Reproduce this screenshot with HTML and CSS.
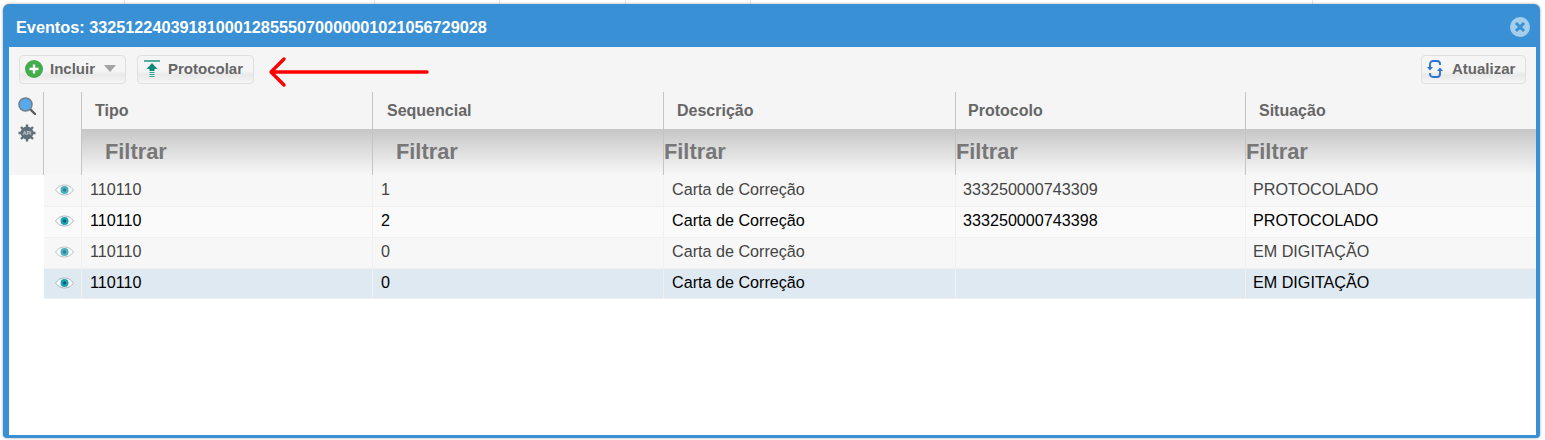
FILE: index.html
```html
<!DOCTYPE html>
<html>
<head>
  <title>Eventos</title>
  <link rel="stylesheet" href="styles.css">
</head>
<body>
  <div class="modal">
    <div class="modal-title">
      <span>Eventos: 33251224039181000128555070000001021056729028</span>
      <svg class="close-icon" width="20" height="20" viewBox="0 0 20 20">
        <circle cx="10" cy="10" r="10" fill="#a5cdec"/>
        <path d="M6 6l8 8M14 6l-8 8" stroke="#3a90d5" stroke-width="3"/>
      </svg>
    </div>

    <div class="modal-body">
      <div class="toolbar">
        <button class="btn btn-incluir">
          <svg width="18" height="18" viewBox="0 0 18 18">
            <circle cx="9" cy="9" r="9" fill="#43ac4c"/>
            <path d="M9 4.500v9M4.500 9h9" stroke="#fff" stroke-width="2.400"/>
          </svg>
          <span>Incluir</span>
          <svg class="caret" width="12" height="7" viewBox="0 0 12 7"><path d="M0 0h12L6 7z" fill="#a3a3a3"/></svg>
        </button>
        <button class="btn btn-protocolar">
          <svg width="16" height="18" viewBox="0 0 16 18">
            <path d="M0 1h16" stroke="#1f9484" stroke-width="1.500"/>
            <path d="M8 3L13.500 9H10.500v2h-5V9H2.500z" fill="#0f8a7a"/>
            <path d="M5.500 12.500h5M5.500 14.500h5M5.500 16.500h5" stroke="#2ea596" stroke-width="1.200"/>
          </svg>
          <span>Protocolar</span>
        </button>
        <button class="btn btn-atualizar">
          <svg width="16" height="18" viewBox="0 0 16 18" fill="none">
            <path d="M3 7V4a3 3 0 0 1 3-3h4a3 3 0 0 1 3 3v1" stroke="#2d74d0" stroke-width="1.900"/>
            <path d="M13 11v3a3 3 0 0 1-3 3H6a3 3 0 0 1-3-3v-1" stroke="#2d74d0" stroke-width="1.900"/>
            <path d="M0 7h6L3 10.500zM10 11h6l-3-3.500z" fill="#2d74d0"/>
          </svg>
          <span>Atualizar</span>
        </button>
        <svg class="red-arrow" width="162" height="32" viewBox="0 0 162 32" fill="none">
          <path d="M160 16H5M17 3L4 16l13 13" stroke="#f00" stroke-width="3.400" stroke-linecap="round" stroke-linejoin="round"/>
        </svg>
      </div>

      <div class="grid-area">
        <div class="side-tools">
          <svg width="18" height="18" viewBox="0 0 18 18">
            <path d="M11 11l6 6" stroke="#555" stroke-width="2.200" stroke-linecap="round"/>
            <circle cx="7.500" cy="7.500" r="6.500" fill="#59a9ee" stroke="#6d7f8c" stroke-width="1.500"/>
          </svg>
          <svg width="18" height="18" viewBox="0 0 18 18">
            <circle cx="9" cy="9" r="6.500" fill="#5f6f7b"/>
            <path d="M9 0.500v17M0.500 9h17M3 3l12 12M15 3L3 15" stroke="#5f6f7b" stroke-width="2.400"/>
            <text class="api-label" x="9" y="10.800">API</text>
          </svg>
        </div>

        <table class="grid">
          <colgroup>
            <col class="col-view">
            <col class="col-a">
            <col class="col-b">
            <col class="col-c">
            <col class="col-d">
            <col>
          </colgroup>
          <thead>
            <tr class="head-row">
              <th rowspan="2" class="view-head"></th>
              <th>Tipo</th>
              <th>Sequencial</th>
              <th>Descrição</th>
              <th>Protocolo</th>
              <th>Situação</th>
            </tr>
            <tr class="filter-row">
              <th class="filter-wide">Filtrar</th>
              <th class="filter-wide">Filtrar</th>
              <th>Filtrar</th>
              <th>Filtrar</th>
              <th>Filtrar</th>
            </tr>
          </thead>
          <tbody>
            <tr class="row-a">
              <td class="view-cell"><svg class="eye" width="19" height="12" viewBox="0 0 19 12"><use href="#eye"/></svg></td>
              <td>110110</td><td>1</td><td>Carta de Correção</td><td>333250000743309</td><td>PROTOCOLADO</td>
            </tr>
            <tr class="row-b">
              <td class="view-cell"><svg class="eye" width="19" height="12" viewBox="0 0 19 12"><use href="#eye"/></svg></td>
              <td>110110</td><td>2</td><td>Carta de Correção</td><td>333250000743398</td><td>PROTOCOLADO</td>
            </tr>
            <tr class="row-a">
              <td class="view-cell"><svg class="eye" width="19" height="12" viewBox="0 0 19 12"><use href="#eye"/></svg></td>
              <td>110110</td><td>0</td><td>Carta de Correção</td><td></td><td>EM DIGITAÇÃO</td>
            </tr>
            <tr class="row-sel">
              <td class="view-cell"><svg class="eye" width="19" height="12" viewBox="0 0 19 12"><use href="#eye"/></svg></td>
              <td>110110</td><td>0</td><td>Carta de Correção</td><td></td><td>EM DIGITAÇÃO</td>
            </tr>
          </tbody>
        </table>
      </div>
    </div>
  </div>

  <svg class="defs" width="0" height="0">
    <symbol id="eye" viewBox="0 0 19 12">
      <path d="M0.500 6C3 2.500 6 1 9.500 1s6.500 1.500 9 5c-2.500 3.500-5.500 5-9 5s-6.500-1.500-9-5z" fill="#fff" stroke="#a9b5bb" stroke-width="1"/>
      <circle cx="9.500" cy="6" r="4" fill="#1aa3b5"/>
      <circle cx="9.500" cy="6" r="1.700" fill="#0b5f70"/>
    </symbol>
  </svg>
</body>
</html>
```

FILE: styles.css
```css
html, body {
  height: 100%;
}
body {
  margin: 0;
  padding: 4px 5px 2px 3px;
  box-sizing: border-box;
  overflow: hidden;
  background-color: #fff;
  /* column lines of the page behind the dialog */
  background-image:
    linear-gradient(#e6e6e6, #e6e6e6),
    linear-gradient(#e6e6e6, #e6e6e6),
    linear-gradient(#e6e6e6, #e6e6e6),
    linear-gradient(#e6e6e6, #e6e6e6),
    linear-gradient(#e6e6e6, #e6e6e6),
    linear-gradient(#e6e6e6, #e6e6e6);
  background-size: 1px 4px;
  background-repeat: no-repeat;
  background-position: 124px 0, 374px 0, 499px 0, 625px 0, 750px 0, 1312px 0;
  font-family: "Liberation Sans", Arial, sans-serif;
}
.defs {
  position: absolute;
}
.modal {
  height: 100%;
  display: flex;
  flex-direction: column;
  box-sizing: border-box;
  border-radius: 6px 6px 4px 4px;
  background: #3a90d5;
  box-shadow: 0 0 3px rgba(0,0,0,0.35);
}
.modal-title {
  height: 43px;
  flex: none;
  display: flex;
  align-items: center;
  justify-content: space-between;
  padding: 3px 10px 0 13px;
  box-sizing: border-box;
  color: #fff;
  font-size: 16.25px;
  font-weight: bold;
}
.modal-body {
  flex: 1;
  margin: 0 4px 3px 6px;
  background: #fff;
}
.toolbar {
  position: relative;
  height: 45px;
  box-sizing: border-box;
  display: flex;
  gap: 11px;
  padding: 8px 10px 0 10px;
  background: #f5f5f5;
}
.btn {
  height: 29px;
  display: flex;
  align-items: center;
  gap: 8px;
  box-sizing: border-box;
  padding: 0 10px 2px 5px;
  border: 1px solid #e0e0e0;
  border-radius: 4px;
  background: linear-gradient(#f5f5f5 55%, #e9e9e9 70%, #f5f5f5);
  color: #666;
  font-family: inherit;
  font-size: 15px;
  font-weight: bold;
}
.btn svg {
  flex: none;
}
.btn-incluir {
  width: 107px;
  gap: 7px;
  padding-right: 4px;
}
.btn-incluir .caret {
  margin-left: 2px;
}
.btn-protocolar {
  width: 117px;
  padding-left: 6px;
}
.btn-atualizar {
  width: 105px;
  margin-left: auto;
  padding-left: 5px;
  gap: 9px;
}
.red-arrow {
  position: absolute;
  left: 258px;
  top: 9px;
}
.grid-area {
  display: flex;
  align-items: flex-start;
}
.side-tools {
  width: 34px;
  height: 83px;
  flex: none;
  display: flex;
  flex-direction: column;
  align-items: center;
  gap: 9px;
  padding: 5px 0 0 1px;
  box-sizing: border-box;
  background: #f5f5f5;
}
.api-label {
  fill: #c9d1d6;
  font-size: 5px;
  font-weight: bold;
  text-anchor: middle;
}
.grid {
  flex: 1;
  min-width: 0;
  table-layout: fixed;
  border-collapse: collapse;
  font-size: 16px;
}
.col-view {
  width: 38px;
}
.col-a {
  width: 291px;
}
.col-b {
  width: 291px;
}
.col-c {
  width: 292px;
}
.col-d {
  width: 290px;
}
.grid th {
  padding: 0;
  text-align: left;
  font-weight: bold;
  border-left: 1px solid #c4c4c4;
}
.head-row th {
  height: 37px;
  padding: 0 0 0 13px;
  box-sizing: border-box;
  background: #f5f5f5;
  color: #666;
}
.head-row th:nth-child(3) {
  padding-left: 14px;
}
.head-row th:nth-child(5) {
  padding-left: 12px;
}
.head-row .view-head {
  padding: 0;
}
.filter-row th {
  height: 46px;
  padding-bottom: 1px;
  box-sizing: border-box;
  background: linear-gradient(#c6c6c6, #f7f7f7);
  color: #777;
  font-size: 21.8px;
}
.filter-row .filter-wide {
  padding-left: 23px;
}
.grid td {
  height: 31px;
  padding: 0 0 2px 8px;
  box-sizing: border-box;
  border-left: 1px solid #f0f0f0;
  border-bottom: 1px solid #f0f0f0;
  font-size: 16.15px;
  white-space: nowrap;
}
.grid tr:first-child td {
  padding-bottom: 1px;
}
.grid .row-sel td {
  height: 30px;
  padding-bottom: 1px;
}
.grid td:nth-child(5),
.grid td:nth-child(6) {
  padding-left: 7px;
}
.grid .view-cell {
  padding: 0 0 2px 0;
  text-align: center;
  border-left: none;
}
.eye {
  display: block;
  margin: 0 auto 0 11px;
}
.row-a {
  background: #f7f7f7;
  color: #444;
}
.row-a .eye {
  opacity: 0.8;
}
.row-b {
  background: #fafafa;
  color: #000;
}
.row-sel {
  background: #dfe9f2;
  color: #000;
}
```
